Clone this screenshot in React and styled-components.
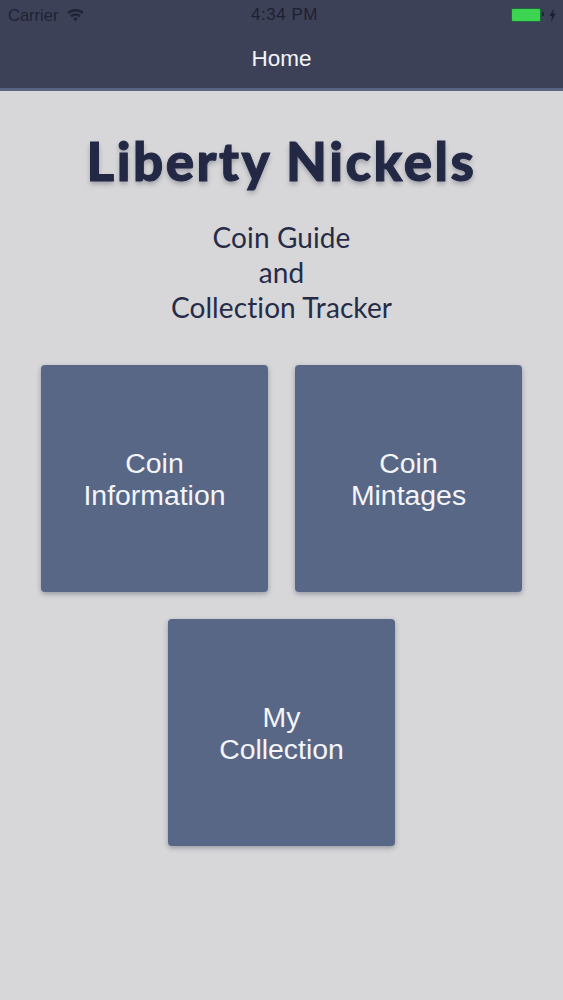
import React from 'react'
import styled, { createGlobalStyle } from 'styled-components'

const GlobalStyle = createGlobalStyle`
  html, body {
    margin: 0;
    padding: 0;
    background: #d7d7d9;
    font-family: "Liberation Sans", Arial, sans-serif;
  }
`

const Screen = styled.div`
  width: 563px;
  height: 1000px;
  overflow: hidden;
  display: flex;
  flex-direction: column;
  background: #d7d7d9;
`

const TopBar = styled.header`
  height: 88px;
  flex: none;
  background: #3d4157;
  border-bottom: 3px solid #5c6486;
  display: flex;
  flex-direction: column;
`

const StatusBar = styled.div`
  height: 28px;
  padding: 1px 7px 0 8px;
  display: grid;
  grid-template-columns: 1fr auto 1fr;
  align-items: center;
  color: #1d2030;
  font-size: 16px;
`

const Carrier = styled.div`
  display: flex;
  align-items: center;
  gap: 9px;
  color: #1f2335;
  font-size: 16.5px;
`

const Clock = styled.div`
  font-size: 17px;
  letter-spacing: 0.5px;
  color: #1d2030;
  margin-left: 5px;
`

const Power = styled.div`
  display: flex;
  justify-content: flex-end;
  align-items: center;
  gap: 8px;
`

const Battery = styled.div`
  position: relative;
  width: 28px;
  height: 12px;
  background: #3dd452;
  border: 1px solid #1f6a3a;
  border-radius: 2px;

  &::after {
    content: "";
    position: absolute;
    top: 3px;
    right: -4px;
    width: 2px;
    height: 4px;
    background: #23273a;
  }
`

const NavTitle = styled.div`
  flex: 1;
  display: flex;
  align-items: center;
  justify-content: center;
  color: #f4f5f8;
  font-size: 22.5px;
`

const Content = styled.main`
  flex: 1;
  display: flex;
  flex-direction: column;
  align-items: center;
`

const Title = styled.h1`
  margin: 38px 0 0;
  font-family: "Lato", sans-serif;
  font-weight: 900;
  font-size: 53px;
  line-height: 64px;
  letter-spacing: 2.5px;
  color: #232945;
  -webkit-text-stroke: 1px #232945;
  text-shadow: 0 3px 5px rgba(40, 44, 70, 0.35);
`

const Subtitle = styled.p`
  margin: 27px 0 0;
  font-family: "Lato", sans-serif;
  font-variant-ligatures: none;
  font-size: 28px;
  line-height: 35px;
  letter-spacing: 0.1px;
  text-align: center;
  color: #262c48;
`

const Grid = styled.div`
  margin-top: 40px;
  display: grid;
  grid-template-columns: 227px 227px;
  grid-auto-rows: 227px;
  gap: 27px;
`

const Tile = styled.button`
  border: 0;
  padding: 0;
  border-radius: 4px;
  background: #596787;
  box-shadow: 0 2px 5px rgba(50, 60, 80, 0.4);
  color: #f3f5f9;
  font-family: "Liberation Sans", Arial, sans-serif;
  font-size: 28.4px;
  line-height: 32px;
  text-align: center;
  grid-column: ${props => (props.$wide ? '1 / span 2' : 'auto')};
  justify-self: ${props => (props.$wide ? 'center' : 'stretch')};
  width: ${props => (props.$wide ? '227px' : 'auto')};
`

const Wifi = () => (
  <svg width="17" height="13" viewBox="0 0 17 13" fill="#1f2335">
    <path d="M8.5 0C5.3 0 2.5 1.2 0.4 3.2L2 5C3.7 3.4 6 2.4 8.5 2.4S13.3 3.4 15 5L16.6 3.2C14.5 1.2 11.7 0 8.5 0Z" />
    <path d="M8.5 4.3C6.5 4.3 4.7 5.1 3.3 6.4L4.9 8.2C5.9 7.3 7.1 6.7 8.5 6.7S11.1 7.3 12.1 8.2L13.7 6.4C12.3 5.1 10.5 4.3 8.5 4.3Z" />
    <path d="M8.5 8.6C7.6 8.6 6.8 8.9 6.2 9.5L8.5 12.4L10.8 9.5C10.2 8.9 9.4 8.6 8.5 8.6Z" />
  </svg>
)

const Bolt = () => (
  <svg width="7" height="14" viewBox="0 0 7 14" fill="#1d2030">
    <path d="M5 0L0.4 8H3L2 14L6.8 5.6H4Z" />
  </svg>
)

const tiles = [
  { id: 'info', lines: ['Coin', 'Information'] },
  { id: 'mint', lines: ['Coin', 'Mintages'] },
  { id: 'mine', lines: ['My', 'Collection'], wide: true },
]

export default function App() {
  return (
    <Screen>
      <GlobalStyle />
      <TopBar>
        <StatusBar>
          <Carrier>Carrier <Wifi /></Carrier>
          <Clock>4:34 PM</Clock>
          <Power><Battery /><Bolt /></Power>
        </StatusBar>
        <NavTitle>Home</NavTitle>
      </TopBar>
      <Content>
        <Title>Liberty Nickels</Title>
        <Subtitle>Coin Guide<br />and<br />Collection Tracker</Subtitle>
        <Grid>
          {tiles.map(t => (
            <Tile key={t.id} $wide={t.wide}>{t.lines[0]}<br />{t.lines[1]}</Tile>
          ))}
        </Grid>
      </Content>
    </Screen>
  )
}
